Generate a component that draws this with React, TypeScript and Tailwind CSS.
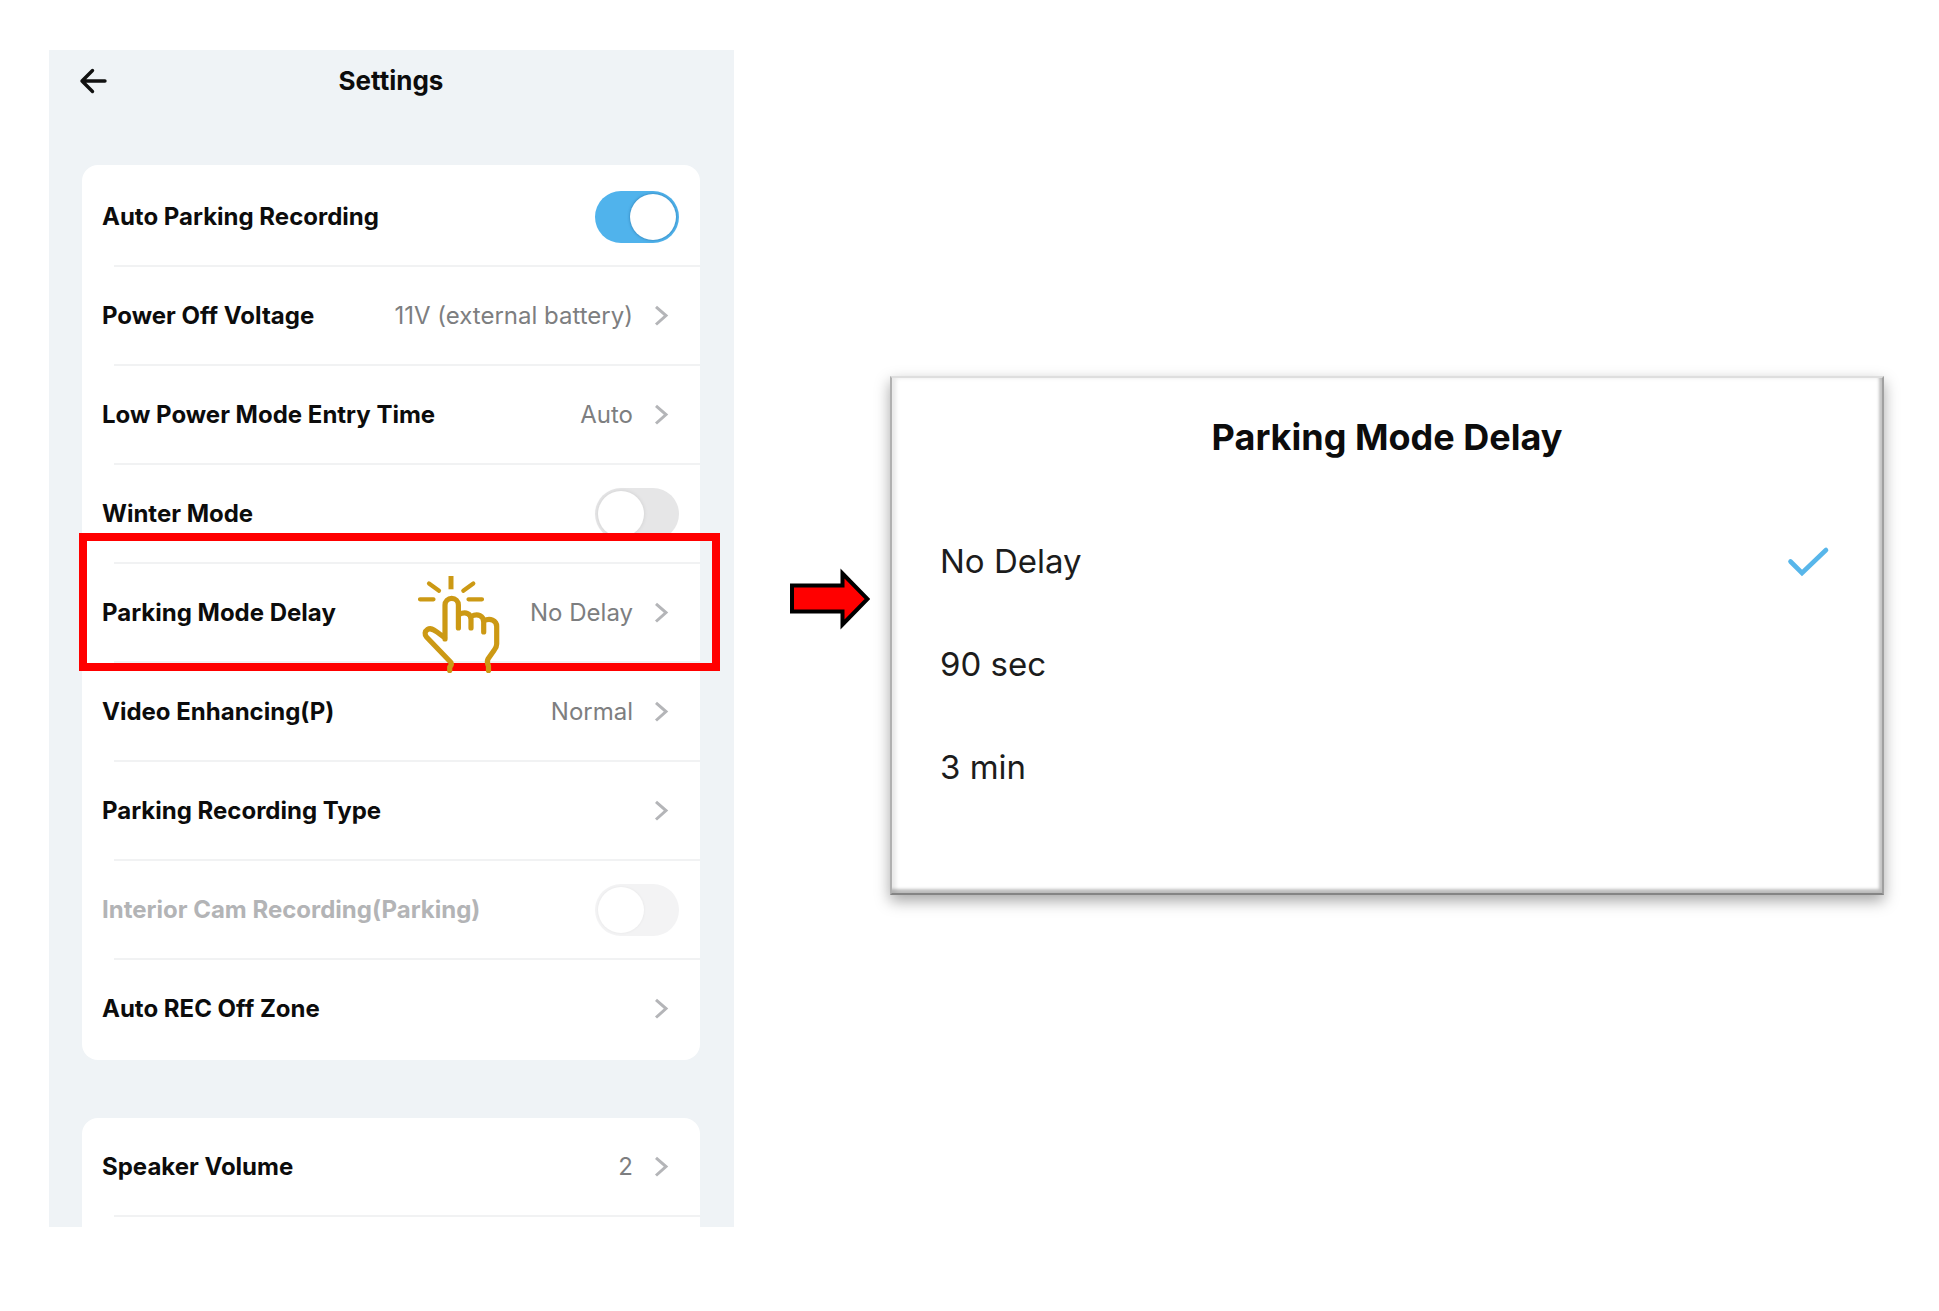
import { useState } from "react";
import clsx from "clsx";

type Row = {
  label: string;
  value?: string;
  toggle?: boolean;
  on?: boolean;
  disabled?: boolean;
  highlight?: boolean;
};

const PARKING_ROWS: Row[] = [
  { label: "Auto Parking Recording", toggle: true, on: true },
  { label: "Power Off Voltage", value: "11V (external battery)" },
  { label: "Low Power Mode Entry Time", value: "Auto" },
  { label: "Winter Mode", toggle: true },
  { label: "Parking Mode Delay", value: "No Delay", highlight: true },
  { label: "Video Enhancing(P)", value: "Normal" },
  { label: "Parking Recording Type" },
  { label: "Interior Cam Recording(Parking)", toggle: true, disabled: true },
  { label: "Auto REC Off Zone" },
];

const DELAYS = ["No Delay", "90 sec", "3 min"];

function ChevronIcon() {
  return (
    <svg className="h-6 w-4" viewBox="0 0 16 24" fill="none" stroke="#b4b5b8" strokeWidth="3">
      <path d="M3 2.800 13 11.500 3 20.500" />
    </svg>
  );
}

function TapHand() {
  return (
    <svg
      className="pointer-events-none absolute top-3 left-[335px] z-20 h-[98px] w-[84px]"
      viewBox="0 0 84 98"
      fill="none"
      stroke="#cc9914"
      strokeWidth="5.2"
    >
      {/* tap rays */}
      <path strokeWidth="5" d="M34 0V13.300" />
      <path strokeWidth="4.200" strokeLinecap="round" d="M12 7.500 22 14.700M56.300 7.500 46.300 14.700M3 23.300H16.500M51.500 23.300H65" />
      {/* index finger and thumb */}
      <path
        strokeLinecap="round"
        strokeLinejoin="round"
        d="M28 63V29a6.700 6.700 0 0 1 13.400 0V52M28 62L20 56C16 53 13.500 51.500 10.500 53.500C7.500 55.500 7.500 58.500 9.500 61L34 86.500Q35 89 32.700 91V94.500"
      />
      {/* folded fingers */}
      <path
        strokeLinecap="round"
        strokeLinejoin="round"
        d="M42 38.500C49 35 54 38 54 43.500V52M54 40.500C61 37 66.700 40 66.700 46V56M66.700 45C73 41.500 79.700 44.500 79.700 50.500V68Q79.700 71 77.300 74L71 83Q69.500 86 71.500 90V94.500"
      />
    </svg>
  );
}

function SettingRow({ row }: { row: Row }) {
  const [on, setOn] = useState(!!row.on);

  if (row.toggle) {
    return (
      <label className="flex h-[97px] items-center justify-between pr-[21px] pl-5">
        <span className={clsx("font-bold", row.disabled ? "text-[#b3b4b6]" : "text-[#0c0c0c]")}>{row.label}</span>
        <input
          type="checkbox"
          role="switch"
          checked={on}
          disabled={row.disabled}
          onChange={() => setOn(!on)}
          className={clsx(
            "h-[52px] w-[84px] appearance-none rounded-full p-[3px] before:block before:size-[46px] before:rounded-full before:bg-white checked:bg-[#50b3ec] checked:before:ml-8 checked:before:shadow-[0_0_3px_rgba(0,60,110,0.5)]",
            row.disabled
              ? "bg-[#f3f3f4] before:shadow-[0_0_3px_rgba(0,0,0,0.06)]"
              : "bg-[#e6e6e7] before:shadow-[0_0_4px_rgba(0,0,0,0.1)]"
          )}
        />
      </label>
    );
  }

  return (
    <button type="button" className="flex h-[97px] w-full items-center justify-between pr-[31px] pl-5 text-left">
      <span className="font-bold text-[#0c0c0c]">{row.label}</span>
      <span className="flex items-center gap-5 text-[#7d7e80]">
        {row.value}
        <ChevronIcon />
      </span>
    </button>
  );
}

function Divider() {
  return <hr className="ml-8 h-0.5 border-0 bg-[#f1f2f3]" />;
}

function SettingsScreen() {
  return (
    <section className="w-[685px] shrink-0 bg-[#eff3f6] pr-[34px] pl-[33px] text-2xl">
      <header className="mb-[53px] grid h-[62px] grid-cols-[32px_1fr_32px] items-center">
        <button type="button" aria-label="Back" className="-ml-1">
          <svg
            className="h-7 w-8"
            viewBox="0 0 32 28"
            fill="none"
            stroke="#111"
            strokeWidth="3.4"
            strokeLinecap="round"
            strokeLinejoin="round"
          >
            <path d="M14.500 3.500 4 14 14.500 24.500M4 14H27" />
          </svg>
        </button>
        <h1 className="text-center text-[26px] font-bold text-[#0c0c0c]">Settings</h1>
      </header>

      <ul className="mb-[58px] rounded-2xl bg-white py-[3px]">
        {PARKING_ROWS.map((row, i) => (
          <li key={row.label} className="relative">
            <SettingRow row={row} />
            {row.highlight && (
              <>
                <div className="pointer-events-none absolute -top-[31px] -right-5 -bottom-2 -left-[3px] z-10 border-8 border-[#ff0000]" />
                <TapHand />
              </>
            )}
            {i < PARKING_ROWS.length - 1 && <Divider />}
          </li>
        ))}
      </ul>

      <ul className="rounded-t-2xl bg-white pb-2.5">
        <li>
          <SettingRow row={{ label: "Speaker Volume", value: "2" }} />
          <Divider />
        </li>
      </ul>
    </section>
  );
}

function DelayDialog() {
  const [delay, setDelay] = useState(DELAYS[0]);

  return (
    <fieldset className="mt-[326px] min-w-0 flex-1 border-2 border-t-[#dedede] border-r-[#a0a0a0] border-b-[#858585] border-l-[#b0b0b0] bg-white pb-[74px] shadow-[0_6px_14px_rgba(0,0,0,0.35),inset_-3px_-4px_3px_rgba(0,0,0,0.24),inset_4px_0_4px_rgba(0,0,0,0.09)]">
      <h2 className="flex h-[132px] items-start justify-center pt-[35px] text-4xl leading-[48px] font-bold text-[#0c0c0c]">
        Parking Mode Delay
      </h2>
      {DELAYS.map((d) => (
        <label key={d} className="flex h-[103px] items-center justify-between pr-[52px] pl-12 text-[33px] text-[#1c1c1c]">
          {d}
          <input
            type="radio"
            name="delay"
            checked={delay === d}
            onChange={() => setDelay(d)}
            className="peer size-0 appearance-none"
          />
          <svg
            className="hidden h-8 w-11 peer-checked:block"
            viewBox="0 0 44 32"
            fill="none"
            stroke="#58b6ea"
            strokeWidth="4.6"
            strokeLinecap="round"
          >
            <path d="M4.500 15.500 16 27 40 4" />
          </svg>
        </label>
      ))}
    </fieldset>
  );
}

export default function App() {
  return (
    <main className="flex min-h-screen items-start bg-white py-[50px] pr-[55px] pl-[49px] font-['Inter',sans-serif]">
      <SettingsScreen />
      <svg className="mt-[518px] mr-5 ml-14 h-[62px] w-20 shrink-0" viewBox="0 0 80 62">
        <path d="M2 17.500H52.500V5.500L77.500 31 52.500 56.500V43.500H2Z" fill="#ff0000" stroke="#000" strokeWidth="4" />
      </svg>
      <DelayDialog />
    </main>
  );
}
